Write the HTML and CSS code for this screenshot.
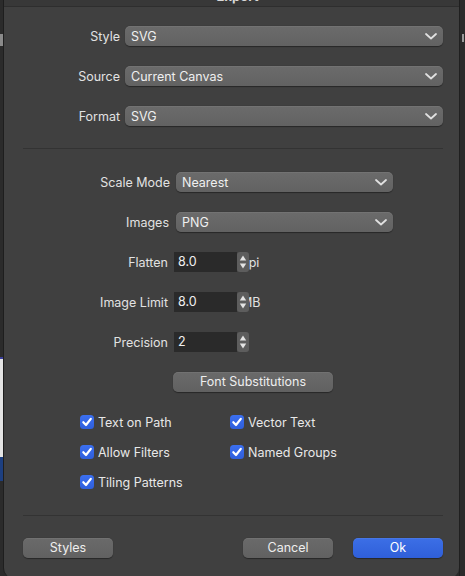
FILE: index.html
```html
<!DOCTYPE html>
<html>
<head>
<meta charset="utf-8">
<link rel="stylesheet" href="styles.css">
</head>
<body>
<div class="screen">
  <div class="edge-left">
    <div class="el-dark1"></div>
    <div class="el-text"></div>
    <div class="el-dark2"></div>
    <div class="el-line"></div>
    <div class="el-light"></div>
    <div class="el-blue"></div>
    <div class="el-dark3"></div>
  </div>
  <div class="dialog">
    <div class="titlebar"><div class="title">Export</div></div>

    <div class="grid grid-top">
      <div class="lbl">Style</div>
      <div class="popup"><span>SVG</span><svg class="chev" viewBox="0 0 12 7" width="12" height="7"><path d="M1 1 L6 5.5 L11 1" /></svg></div>
      <div class="lbl">Source</div>
      <div class="popup"><span>Current Canvas</span><svg class="chev" viewBox="0 0 12 7" width="12" height="7"><path d="M1 1 L6 5.5 L11 1" /></svg></div>
      <div class="lbl">Format</div>
      <div class="popup"><span>SVG</span><svg class="chev" viewBox="0 0 12 7" width="12" height="7"><path d="M1 1 L6 5.5 L11 1" /></svg></div>
    </div>

    <div class="sep sep-1"></div>

    <div class="grid grid-mid">
      <div class="lbl">Scale Mode</div>
      <div class="popup popup-narrow"><span>Nearest</span><svg class="chev" viewBox="0 0 12 7" width="12" height="7"><path d="M1 1 L6 5.5 L11 1" /></svg></div>
      <div class="lbl lbl-b">Images</div>
      <div class="popup popup-narrow"><span>PNG</span><svg class="chev" viewBox="0 0 12 7" width="12" height="7"><path d="M1 1 L6 5.5 L11 1" /></svg></div>
      <div class="lbl lbl-c">Flatten</div>
      <div class="spin">
        <div class="field">8.0</div>
        <div class="unit">dpi</div>
        <div class="stepper"><svg viewBox="0 0 12 20" width="12" height="20"><path d="M6 3.5 L9.2 8.5 L2.8 8.5 Z"/><path d="M6 16.5 L9.2 11.5 L2.8 11.5 Z"/></svg></div>
      </div>
      <div class="lbl lbl-c">Image Limit</div>
      <div class="spin">
        <div class="field">8.0</div>
        <div class="unit">MB</div>
        <div class="stepper"><svg viewBox="0 0 12 20" width="12" height="20"><path d="M6 3.5 L9.2 8.5 L2.8 8.5 Z"/><path d="M6 16.5 L9.2 11.5 L2.8 11.5 Z"/></svg></div>
      </div>
      <div class="lbl lbl-c">Precision</div>
      <div class="spin">
        <div class="field">2</div>
        <div class="stepper"><svg viewBox="0 0 12 20" width="12" height="20"><path d="M6 3.5 L9.2 8.5 L2.8 8.5 Z"/><path d="M6 16.5 L9.2 11.5 L2.8 11.5 Z"/></svg></div>
      </div>
      <div></div>
      <div class="btn btn-font">Font Substitutions</div>
    </div>

    <div class="checks">
      <div class="check"><span class="box"><svg viewBox="0 0 14 14" width="14" height="14"><path d="M3.3 7.2 L6 10 L10.8 3.8"/></svg></span>Text on Path</div>
      <div class="check"><span class="box"><svg viewBox="0 0 14 14" width="14" height="14"><path d="M3.3 7.2 L6 10 L10.8 3.8"/></svg></span>Vector Text</div>
      <div class="check"><span class="box"><svg viewBox="0 0 14 14" width="14" height="14"><path d="M3.3 7.2 L6 10 L10.8 3.8"/></svg></span>Allow Filters</div>
      <div class="check"><span class="box"><svg viewBox="0 0 14 14" width="14" height="14"><path d="M3.3 7.2 L6 10 L10.8 3.8"/></svg></span>Named Groups</div>
      <div class="check"><span class="box"><svg viewBox="0 0 14 14" width="14" height="14"><path d="M3.3 7.2 L6 10 L10.8 3.8"/></svg></span>Tiling Patterns</div>
    </div>

    <div class="sep sep-2"></div>

    <div class="footer">
      <div class="btn btn-foot">Styles</div>
      <div class="spacer"></div>
      <div class="btn btn-foot">Cancel</div>
      <div class="btn btn-foot btn-ok">Ok</div>
    </div>
  </div>
  <div class="edge-right">
    <div class="er-mark"></div>
  </div>
</div>
</body>
</html>
```

FILE: styles.css
```css
html, body {
  margin: 0;
  padding: 0;
  background: #2a2a2a;
  overflow: hidden;
}
body {
  font-family: "Inter", "Liberation Sans", sans-serif;
  font-size: 12.5px;
  color: #e2e2e2;
  -webkit-font-smoothing: antialiased;
}
.screen {
  display: flex;
  width: 465px;
  height: 576px;
  overflow: hidden;
}
.edge-left {
  width: 3px;
  flex: none;
  display: flex;
  flex-direction: column;
  background: #2b2b2b;
}
.el-dark1 { height: 34px; background: #2b2b2b; }
.el-text { height: 12px; background: #8a8a8a; }
.el-dark2 { height: 311px; background: #2b2b2b; }
.el-line { height: 2px; background: #3b3f9a; }
.el-light { height: 98px; background: #e4e4e4; }
.el-blue { height: 24px; background: #1d3f80; }
.el-dark3 { flex: 1; background: #2b2b2b; }

.edge-right {
  width: 6px;
  flex: none;
  background: #2b2b2b;
  border-left: 1px solid #1f1f1f;
  box-sizing: border-box;
  padding-top: 34px;
}
.er-mark {
  margin-left: 2px;
  width: 2px;
  height: 8px;
  background: #9a9a9a;
}

.dialog {
  width: 456px;
  height: 578px;
  flex: none;
  box-sizing: border-box;
  background: #404040;
  border-left: 1px solid #1e1e1e;
  border-radius: 0 0 10px 10px;
  padding: 0 16px 0 19px;
  display: flex;
  flex-direction: column;
}
.titlebar {
  height: 6px;
  margin: 0 -16px 0 -19px;
  background: #383838;
  border-bottom: 1px solid #2e2e2e;
  overflow: hidden;
  text-align: center;
}
.title {
  font-weight: 700;
  font-size: 13px;
  color: #d8d8d8;
  line-height: 16px;
  margin-top: -12px;
  padding-left: 12px;
}

.grid {
  display: grid;
  align-items: center;
}
.grid-top {
  grid-template-columns: 97px 318px;
  column-gap: 5px;
  row-gap: 20px;
  grid-auto-rows: 20px;
  margin-top: 19px;
}
.lbl {
  text-align: right;
  white-space: nowrap;
  color: #e2e2e2;
}
.popup {
  height: 20px;
  box-sizing: border-box;
  border-radius: 5px;
  background: linear-gradient(#6b6b6b, #626262);
  box-shadow: inset 0 1px 0 rgba(255,255,255,0.06), 0 0.5px 1px rgba(0,0,0,0.4);
  display: flex;
  align-items: center;
  padding: 0 6px 0 6px;
  color: #f0f0f0;
}
.popup span { flex: 1; }
.chev {
  fill: none;
  stroke: #e0e0e0;
  stroke-width: 1.8;
  stroke-linecap: round;
  stroke-linejoin: round;
}

.sep {
  height: 1px;
  background: #333333;
  flex: none;
}
.sep-1 { margin-top: 22px; }
.sep-2 { margin-top: 25px; }

.grid-mid {
  grid-template-columns: 147px 219px;
  column-gap: 4px;
  row-gap: 20px;
  grid-auto-rows: 20px;
  margin-top: 23px;
}
.lbl-b { padding-right: 1px; }
.lbl-c { padding-right: 2px; }
.popup-narrow {
  margin-left: 2px;
  width: 217px;
}
.spin {
  display: grid;
  grid-template-columns: 63px 12px auto;
  grid-template-rows: 20px;
  align-items: center;
}
.field {
  grid-column: 1 / 2;
  grid-row: 1;
  height: 20px;
  line-height: 20px;
  box-sizing: border-box;
  padding-left: 4px;
  background: #2a2a2a;
  color: #f0f0f0;
}
.unit {
  grid-column: 2 / 4;
  grid-row: 1;
  padding-left: 4px;
  color: #e2e2e2;
  white-space: nowrap;
}
.stepper {
  grid-column: 2 / 3;
  grid-row: 1;
  z-index: 1;
  width: 12px;
  height: 20px;
  border-radius: 3px;
  background: #5d5d5d;
  display: flex;
}
.stepper svg { fill: #e4e4e4; }

.btn {
  height: 20px;
  line-height: 20px;
  border-radius: 5px;
  background: linear-gradient(#6a6a6a, #616161);
  box-shadow: inset 0 1px 0 rgba(255,255,255,0.06), 0 0.5px 1px rgba(0,0,0,0.4);
  text-align: center;
  color: #eeeeee;
}
.btn-font {
  width: 160px;
  margin-left: -1px;
}

.checks {
  display: grid;
  grid-template-columns: 150px 150px;
  grid-auto-rows: 16px;
  row-gap: 14px;
  margin-top: 22px;
  padding-left: 57px;
}
.check {
  display: flex;
  align-items: center;
  white-space: nowrap;
  color: #e8e8e8;
}
.box {
  width: 14px;
  height: 14px;
  border-radius: 3.5px;
  background: linear-gradient(#3b6ff0, #2f5fdc);
  margin-right: 4px;
  display: flex;
  flex: none;
}
.box svg {
  fill: none;
  stroke: #ffffff;
  stroke-width: 2.2;
  stroke-linecap: round;
  stroke-linejoin: round;
}

.footer {
  display: flex;
  margin-top: 22px;
  gap: 20px;
}
.spacer { flex: 1; }
.btn-foot { width: 90px; }
.btn-ok {
  background: linear-gradient(#3c6fe6, #2f5fd9);
  color: #ffffff;
}
```
